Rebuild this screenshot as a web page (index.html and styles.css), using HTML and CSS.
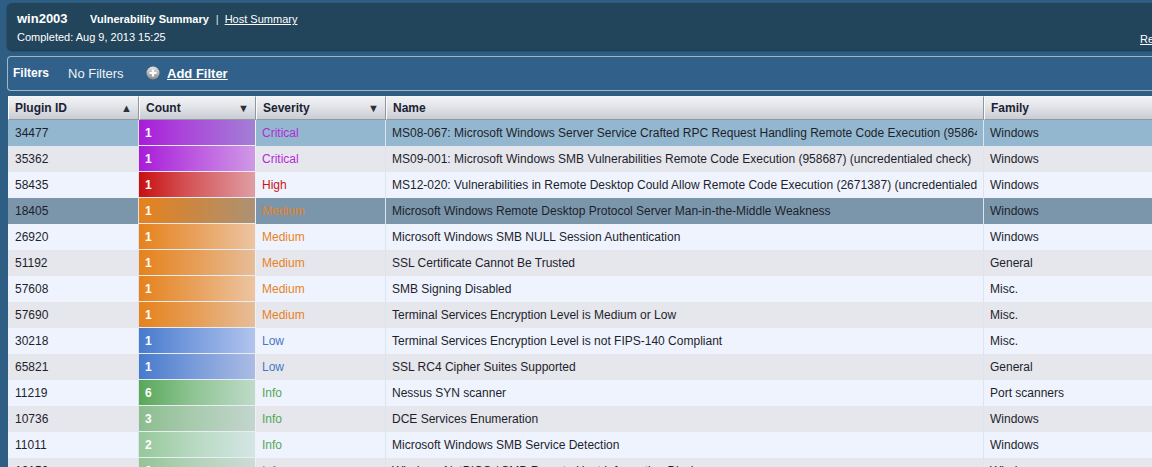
FILE: index.html
```html
<!DOCTYPE html>
<html>
<head>
<meta charset="utf-8">
<title>win2003 - Vulnerability Summary</title>
<link rel="stylesheet" href="styles.css">
</head>
<body>
<div class="page">
  <header class="summary">
    <div class="summary-top">
      <span class="host">win2003</span>
      <nav class="tabs">
        <span class="tab-active">Vulnerability Summary</span>
        <span class="tab-sep">|</span>
        <a class="tab-link">Host Summary</a>
      </nav>
    </div>
    <div class="summary-bottom">
      <span class="completed">Completed: Aug 9, 2013 15:25</span>
      <a class="reports">Reports</a>
    </div>
  </header>

  <div class="filters">
    <span class="filters-label">Filters</span>
    <span class="filters-none">No Filters</span>
    <span class="add-filter">
      <svg class="plus-icon" width="14" height="14" viewBox="0 0 14 14">
        <defs>
          <linearGradient id="pg" x1="0" y1="0" x2="0" y2="1">
            <stop offset="0" stop-color="#e4e4e4"/>
            <stop offset="1" stop-color="#8a8a8a"/>
          </linearGradient>
        </defs>
        <circle cx="7" cy="7" r="6.5" fill="url(#pg)"/>
        <path d="M7 3.5v7M3.5 7h7" stroke="#fff" stroke-width="2.2"/>
      </svg>
      <a class="add-link">Add Filter</a>
    </span>
  </div>

  <div class="grid-wrap">
    <table class="grid">
      <colgroup>
        <col class="c-id"><col class="c-count"><col class="c-sev"><col class="c-name"><col class="c-fam">
      </colgroup>
      <thead>
        <tr>
          <th><div class="th-in"><span>Plugin ID</span><span class="arrow">&#9650;</span></div></th>
          <th><div class="th-in"><span>Count</span><span class="arrow">&#9660;</span></div></th>
          <th><div class="th-in"><span>Severity</span><span class="arrow">&#9660;</span></div></th>
          <th><div class="th-in"><span>Name</span></div></th>
          <th><div class="th-in"><span>Family</span></div></th>
        </tr>
      </thead>
      <tbody>
        <tr class="sel">
          <td>34477</td><td class="count bar-critical">1</td><td class="sev-critical">Critical</td>
          <td><span class="clip">MS08-067: Microsoft Windows Server Service Crafted RPC Request Handling Remote Code Execution (958644) (uncredentialed check)</span></td><td>Windows</td>
        </tr>
        <tr class="even">
          <td>35362</td><td class="count bar-critical">1</td><td class="sev-critical">Critical</td>
          <td><span class="clip">MS09-001: Microsoft Windows SMB Vulnerabilities Remote Code Execution (958687) (uncredentialed check)</span></td><td>Windows</td>
        </tr>
        <tr class="odd">
          <td>58435</td><td class="count bar-high">1</td><td class="sev-high">High</td>
          <td><span class="clip">MS12-020: Vulnerabilities in Remote Desktop Could Allow Remote Code Execution (2671387) (uncredentialed check)</span></td><td>Windows</td>
        </tr>
        <tr class="sel-dark">
          <td>18405</td><td class="count bar-medium">1</td><td class="sev-medium">Medium</td>
          <td>Microsoft Windows Remote Desktop Protocol Server Man-in-the-Middle Weakness</td><td>Windows</td>
        </tr>
        <tr class="odd">
          <td>26920</td><td class="count bar-medium">1</td><td class="sev-medium">Medium</td>
          <td>Microsoft Windows SMB NULL Session Authentication</td><td>Windows</td>
        </tr>
        <tr class="even">
          <td>51192</td><td class="count bar-medium">1</td><td class="sev-medium">Medium</td>
          <td>SSL Certificate Cannot Be Trusted</td><td>General</td>
        </tr>
        <tr class="odd">
          <td>57608</td><td class="count bar-medium">1</td><td class="sev-medium">Medium</td>
          <td>SMB Signing Disabled</td><td>Misc.</td>
        </tr>
        <tr class="even">
          <td>57690</td><td class="count bar-medium">1</td><td class="sev-medium">Medium</td>
          <td>Terminal Services Encryption Level is Medium or Low</td><td>Misc.</td>
        </tr>
        <tr class="odd">
          <td>30218</td><td class="count bar-low">1</td><td class="sev-low">Low</td>
          <td>Terminal Services Encryption Level is not FIPS-140 Compliant</td><td>Misc.</td>
        </tr>
        <tr class="even">
          <td>65821</td><td class="count bar-low">1</td><td class="sev-low">Low</td>
          <td>SSL RC4 Cipher Suites Supported</td><td>General</td>
        </tr>
        <tr class="odd">
          <td>11219</td><td class="count bar-info6">6</td><td class="sev-info">Info</td>
          <td>Nessus SYN scanner</td><td>Port scanners</td>
        </tr>
        <tr class="even">
          <td>10736</td><td class="count bar-info3">3</td><td class="sev-info">Info</td>
          <td>DCE Services Enumeration</td><td>Windows</td>
        </tr>
        <tr class="odd">
          <td>11011</td><td class="count bar-info2">2</td><td class="sev-info">Info</td>
          <td>Microsoft Windows SMB Service Detection</td><td>Windows</td>
        </tr>
        <tr class="even">
          <td>10150</td><td class="count bar-info2">2</td><td class="sev-info">Info</td>
          <td>Windows NetBIOS / SMB Remote Host Information Disclosure</td><td>Windows</td>
        </tr>
      </tbody>
    </table>
  </div>
</div>
</body>
</html>
```

FILE: styles.css
```css
* { box-sizing: border-box; }
html, body { margin: 0; padding: 0; }
body {
  background: #2e5e84;
  font-family: "Liberation Sans", Arial, Helvetica, sans-serif;
  font-size: 12px;
  color: #1d1f2b;
  width: 1152px;
  height: 467px;
  overflow: hidden;
}
.page { padding: 3px 0 0 7px; width: 1260px; }

/* Summary header */
.summary {
  width: 1240px;
  height: 47px;
  background: #22455c;
  border-radius: 5px 0 0 5px;
  box-shadow: 0 1px 2px rgba(0, 0, 0, 0.45);
  padding: 8px 0 0 10px;
  color: #ffffff;
}
.summary-top { display: flex; align-items: baseline; }
.host { font-weight: bold; font-size: 13px; width: 73px; }
.tabs { display: flex; align-items: baseline; font-size: 11px; }
.tab-active { font-weight: bold; }
.tab-sep { margin: 0 6px 0 7px; color: #dfe6ec; }
.tab-link { text-decoration: underline; color: #ffffff; }
.summary-bottom {
  display: grid;
  grid-template-columns: 1123px auto;
  align-items: end;
  margin-top: 5px;
  font-size: 11px;
}
.reports { text-decoration: underline; font-size: 11px; color: #fff; position: relative; top: 2px; }

/* Filters bar */
.filters {
  margin-top: 6px;
  width: 1240px;
  height: 35px;
  border: 1px solid #a3b6c8;
  border-right: none;
  border-radius: 4px 0 0 4px;
  background: #31618a;
  display: flex;
  align-items: center;
  padding: 0 0 1px 5px;
  color: #ffffff;
}
.filters-label { font-weight: bold; font-size: 12px; width: 55px; }
.filters-none { font-size: 13px; color: #eef2f6; width: 78px; }
.add-filter { display: flex; align-items: center; gap: 7px; }
.plus-icon { display: block; }
.add-link { font-weight: bold; font-size: 13px; text-decoration: underline; color: #fff; }

/* Grid */
.grid-wrap { margin: 5px 0 0 1px; }
.grid {
  table-layout: fixed;
  border-collapse: separate;
  border-spacing: 0;
  width: 1176px;
}
.c-id { width: 131px; }
.c-count { width: 117px; }
.c-sev { width: 130px; }
.c-name { width: 598px; }
.c-fam { width: 200px; }

.grid th {
  height: 24px;
  padding: 0;
  text-align: left;
  font-weight: bold;
  font-size: 12px;
  color: #1b2233;
  background: linear-gradient(#f1f2f5 0%, #e2e4e8 45%, #c9ccd3 100%);
  border-top: 1px solid #f4f5f7;
  border-bottom: 1px solid #8f98a4;
  border-right: 1px solid #8f97a3;
  border-left: 1px solid #fafbfc;
}
.th-in {
  display: flex;
  justify-content: space-between;
  align-items: center;
  padding: 0 6px 0 6px;
  height: 22px;
}
.arrow { font-size: 11px; color: #2a2f38; }

.grid td {
  height: 26px;
  padding: 0 6px;
  white-space: nowrap;
  overflow: hidden;
  text-overflow: clip;
  border-right: 1px solid #dde4ee;
  vertical-align: middle;
}
.grid td:first-child { padding-left: 7px; }
.clip { display: block; overflow: hidden; white-space: nowrap; }

tr.odd { background: #eff3fe; }
tr.even { background: #e6e6ed; }
tr.sel { background: #94b7d0; }
tr.sel-dark { background: #7b96ab; }

.grid td.count {
  color: #ffffff;
  font-weight: bold;
  font-size: 12px;
  border-bottom: 1px solid #e8edf4;
  border-right: 1px solid #eef2f8;
  padding-top: 1px;
}

.bar-critical { background-image: linear-gradient(90deg, rgba(168, 28, 216, 1) 0%, rgba(175, 45, 220, 0.85) 35%, rgba(180, 60, 220, 0.45) 100%); }
.bar-high { background-image: linear-gradient(90deg, rgba(200, 16, 16, 1) 0%, rgba(205, 40, 40, 0.8) 40%, rgba(200, 30, 30, 0.4) 100%); }
.bar-medium { background-image: linear-gradient(90deg, rgba(230, 130, 28, 1) 0%, rgba(230, 130, 30, 0.75) 45%, rgba(232, 140, 50, 0.45) 100%); }
.bar-low { background-image: linear-gradient(90deg, rgba(72, 122, 204, 1) 0%, rgba(80, 128, 210, 0.75) 45%, rgba(90, 130, 215, 0.42) 100%); }
.bar-info6 { background-image: linear-gradient(90deg, rgba(88, 168, 88, 1) 0%, rgba(100, 175, 100, 0.7) 45%, rgba(110, 180, 115, 0.38) 100%); }
.bar-info3 { background-image: linear-gradient(90deg, rgba(110, 175, 110, 0.75) 0%, rgba(115, 180, 120, 0.55) 45%, rgba(120, 180, 140, 0.32) 100%); }
.bar-info2 { background-image: linear-gradient(90deg, rgba(120, 185, 120, 0.75) 0%, rgba(125, 190, 130, 0.5) 45%, rgba(130, 190, 150, 0.25) 100%); }

.sev-critical { color: #b22bd8; }
.sev-high { color: #cc1414; }
.sev-medium { color: #e8821e; }
.sev-low { color: #4876c6; }
.sev-info { color: #55a655; }
```
